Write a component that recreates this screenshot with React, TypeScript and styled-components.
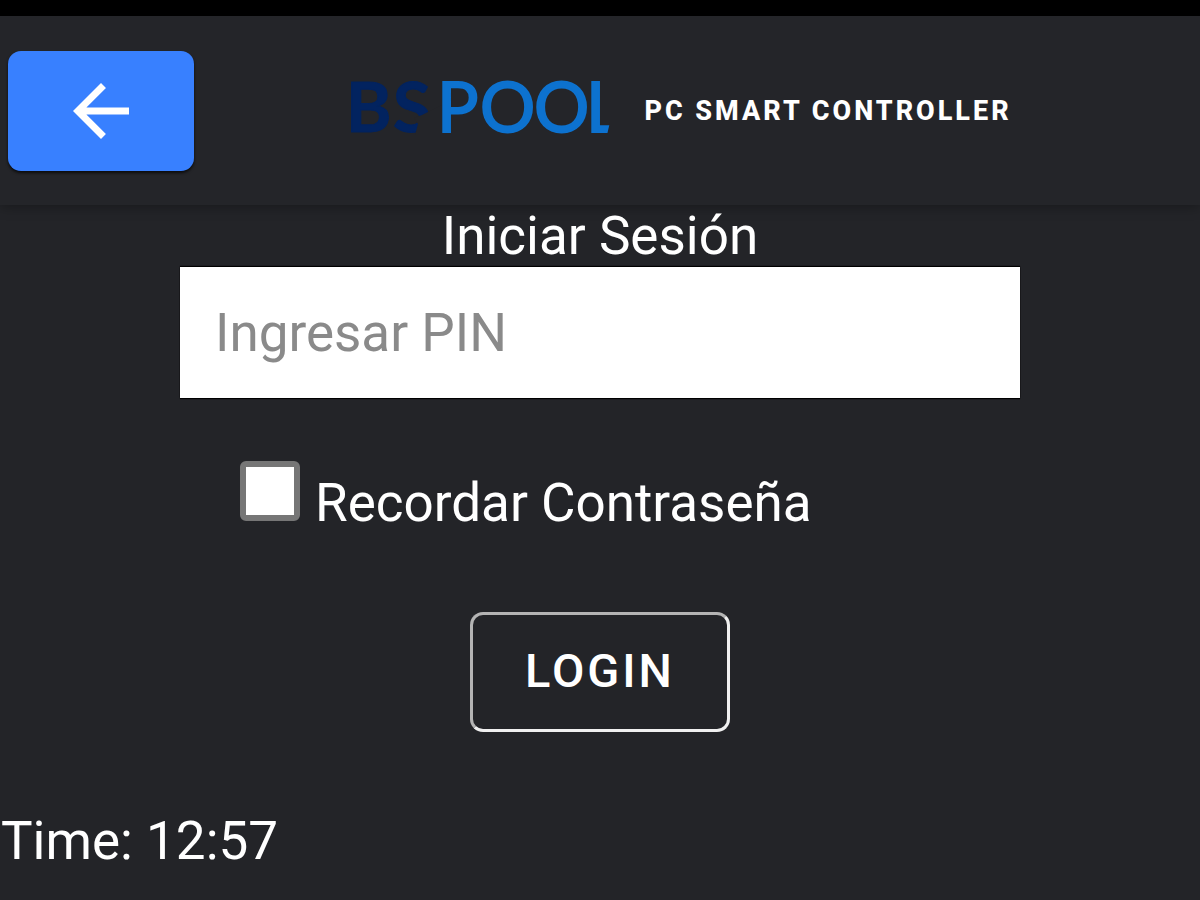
import React from "react";
import styled, { createGlobalStyle } from "styled-components";

const GlobalStyle = createGlobalStyle`
  *, *::before, *::after { box-sizing: border-box; }
  html { background: #232428; }
  body {
    margin: 0;
    background: #232428;
    color: #fff;
    font-family: Roboto, "Liberation Sans", sans-serif;
    font-size: 53px;
    line-height: 62px;
  }
`;

const Page = styled.div`
  min-height: 100vh;
  overflow: hidden;
`;

const StatusBar = styled.div`
  height: 16px;
  background: #000;
`;

const Header = styled.header`
  display: flex;
  align-items: center;
  height: 189px;
  padding: 0 8px;
  background: #242529;
  box-shadow: 0 2px 12px rgba(0, 0, 0, 0.3);
`;

const BackButton = styled.button`
  display: flex;
  align-items: center;
  justify-content: center;
  flex: none;
  width: 186px;
  height: 120px;
  padding: 0;
  border: 0;
  border-radius: 13px;
  background: #3880ff;
  color: #fff;
  box-shadow: 0 2px 3px rgba(0, 0, 0, 0.7);
  cursor: pointer;
`;

const Brand = styled.div`
  display: flex;
  align-items: center;
  justify-content: center;
  flex: 1;
  gap: 36px;
  padding-right: 24px;
`;

const Logo = styled.svg`
  display: block;
  flex: none;
  margin-bottom: 8px;
  overflow: visible;
`;

const BrandTitle = styled.h1`
  margin: 0;
  font-size: 27px;
  line-height: 32px;
  font-weight: 800;
  letter-spacing: 3px;
  text-transform: uppercase;
  white-space: nowrap;
`;

const Form = styled.form`
  display: flex;
  flex-direction: column;
  align-items: center;
`;

const Heading = styled.h2`
  margin: 0;
  font-size: inherit;
  font-weight: 400;
`;

const PinInput = styled.input`
  width: 70%;
  height: 131px;
  padding: 0 35px;
  border: 0;
  border-radius: 0;
  background: #fff;
  color: #222;
  font: inherit;
  box-shadow: 0 1px 1px #000, 0 -1px 1px #000;

  &::placeholder {
    color: #8a8a8a;
    opacity: 1;
  }
`;

const RememberRow = styled.label`
  display: flex;
  align-items: flex-start;
  align-self: flex-start;
  gap: 15px;
  margin: 63px 0 78px 20%;
`;

const Checkbox = styled.input`
  appearance: none;
  flex: none;
  width: 60px;
  height: 60px;
  margin: 0;
  border: 6px solid #767676;
  border-radius: 6px;
  background: #fff;

  &:checked {
    background: #3880ff;
  }
`;

const RememberText = styled.span`
  padding-top: 11px;
`;

const LoginButton = styled.button`
  width: 260px;
  height: 120px;
  padding: 0 0 2px;
  border: 3px solid;
  border-color: #b4b4b4 #f0f0f0 #f0f0f0 #b4b4b4;
  border-radius: 13px;
  background: transparent;
  color: #fff;
  font: inherit;
  font-size: 47px;
  font-weight: 500;
  letter-spacing: 3px;
  text-transform: uppercase;
  cursor: pointer;
`;

const Clock = styled.p`
  margin: 78px 0 0;
  padding-left: 1px;
`;

const LogoText = styled.text<{ $weight: number }>`
  font-family: Lato, "Liberation Sans", sans-serif;
  font-size: 69px;
  font-weight: ${(p) => p.$weight};
`;

function BrandLogo() {
  return (
    <Logo width="258" height="56" viewBox="0 0 258 56" role="img" aria-label="BS Pool">
      <LogoText $weight={700} x="-4 43" y="53" fill="#02235f" stroke="#02235f">BS</LogoText>
      {/* the S is open at its lower right */}
      <path d="M72 36 L92 26 V56 H65 L68 45 L64 39 Z" fill="#242529" />
      <LogoText $weight={400} x="87 130 184 236" y="53" fill="#0d72cf" stroke="#0d72cf" strokeWidth="2">POOL</LogoText>
      {/* shortened foot of the L */}
      <path d="M260 43 H280 V56 H257 Z" fill="#242529" />
    </Logo>
  );
}

export default function App() {
  return (
    <>
      <GlobalStyle />
      <Page>
        <StatusBar />
        <Header>
          <BackButton type="button" aria-label="Volver">
            <svg width="56" height="56" viewBox="4 4 16 16" fill="currentColor" aria-hidden="true">
              <path d="M20 11H7.83l5.59-5.59L12 4l-8 8 8 8 1.41-1.41L7.83 13H20v-2z" />
            </svg>
          </BackButton>
          <Brand>
            <BrandLogo />
            <BrandTitle>PC Smart Controller</BrandTitle>
          </Brand>
        </Header>
        <main>
          <Form onSubmit={(e) => e.preventDefault()}>
            <Heading>Iniciar Sesión</Heading>
            <PinInput type="password" placeholder="Ingresar PIN" aria-label="Ingresar PIN" />
            <RememberRow>
              <Checkbox type="checkbox" />
              <RememberText>Recordar Contraseña</RememberText>
            </RememberRow>
            <LoginButton type="submit">Login</LoginButton>
          </Form>
          <Clock>Time: 12:57</Clock>
        </main>
      </Page>
    </>
  );
}
